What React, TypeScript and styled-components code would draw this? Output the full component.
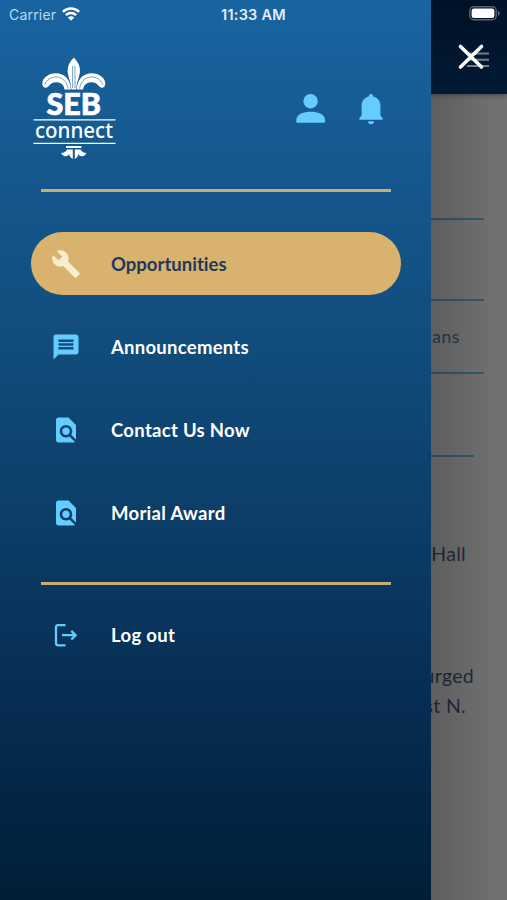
import React from "react";
import styled, { createGlobalStyle } from "styled-components";
import { MdBuild, MdFindInPage, MdMessage } from "react-icons/md";

const GlobalStyle = createGlobalStyle`
  * { box-sizing: border-box; }
  body { margin: 0; font-family: Lato, "Open Sans", sans-serif; }
`;

const Screen = styled.div`
  position: relative;
  width: 507px;
  height: 900px;
  overflow: hidden;
  background: #707070;
`;

const Page = styled.main`
  display: flex;
  flex-direction: column;
  height: 900px;
`;

const PageHeader = styled.header`
  display: flex;
  flex-direction: column;
  align-items: flex-end;
  flex: none;
  height: 94px;
  padding: 6px 7px 0 0;
  background: linear-gradient(#001027, #031a34);
  box-shadow: 0 1px 5px rgba(0, 0, 0, 0.4);
`;

const MenuGlyph = styled.svg`
  margin: 31px 11px 0 0;
`;

const PageRow = styled.div<{ $height: number; $inset?: number }>`
  flex: none;
  display: flex;
  align-items: center;
  justify-content: flex-end;
  height: ${(p) => p.$height}px;
  margin: 0 ${(p) => p.$inset ?? 23}px 0 40px;
  border-bottom: 2px solid #37586b;
`;

const RowText = styled.span`
  margin: 0 24px 0 0;
  font-size: 17.5px;
  letter-spacing: 0.6px;
  color: #263749;
`;

const Copy = styled.p<{ $top: number; $right: number }>`
  flex: none;
  margin: ${(p) => p.$top}px ${(p) => p.$right}px 0 40px;
  text-align: right;
  font-size: 19.5px;
  line-height: 30px;
  letter-spacing: 0.3px;
  color: #1f2b3d;
`;

const Shade = styled.div`
  position: absolute;
  inset: 94px 0 0 431px;
  background: linear-gradient(90deg, rgba(0, 0, 0, 0.16), rgba(0, 0, 0, 0) 85%);
`;

const CloseButton = styled.button`
  position: absolute;
  top: 43px;
  left: 457px;
  display: flex;
  padding: 0;
  border: 0;
  background: none;
`;

const Drawer = styled.aside`
  position: absolute;
  inset: 0 auto 0 0;
  display: flex;
  flex-direction: column;
  width: 431px;
  background: linear-gradient(#1965a1 0%, #165b94 13%, #124f80 34%, #0c3e68 57%, #062d52 78%, #001e37 100%);
`;

const StatusBar = styled.div`
  display: flex;
  flex: none;
  align-items: center;
  height: 28px;
  padding-left: 9px;
  font-family: Inter, Roboto, sans-serif;
  font-size: 14px;
  color: #e4eef8;
`;

const Carrier = styled.span`
  width: 53px;
  letter-spacing: 0.2px;
  color: #bcd8f0;
`;

const Clock = styled.span`
  margin-left: 141px;
  font-size: 14.5px;
  font-weight: 600;
  letter-spacing: 0.25px;
  white-space: nowrap;
`;

const Brand = styled.div`
  display: flex;
  flex: none;
  align-items: flex-start;
  height: 160.5px;
  padding: 28px 0 0 30px;
`;

const Profile = styled.svg`
  margin: 38px 0 0 176px;
`;

const Bell = styled.svg`
  margin: 38px 0 0 33px;
`;

const Rule = styled.hr`
  flex: none;
  width: 350px;
  height: 3px;
  margin: 0 0 0 41px;
  border: 0;
  background: #c4ae74;
`;

const Nav = styled.nav`
  display: flex;
  flex-direction: column;
  gap: 20px;
  padding: 40.5px 30px 37px 31px;
`;

const NavItem = styled.a<{ $active?: boolean }>`
  display: flex;
  align-items: center;
  height: 63.2px;
  padding-left: 19.5px;
  border-radius: 32px;
  color: ${(p) => (p.$active ? "#1d3a5f" : "#fff")};
  background: ${(p) => (p.$active ? "#d9b26d" : "transparent")};
  svg {
    flex: none;
    color: ${(p) => (p.$active ? "#f8edcf" : "#65ccff")};
  }
`;

const Label = styled.span<{ $spacing: number }>`
  margin-left: 30.5px;
  font-size: 18.5px;
  font-weight: 700;
  white-space: nowrap;
  letter-spacing: ${(p) => p.$spacing}px;
`;

const Footer = styled.div`
  padding: 19px 30px 0 31px;
`;

const WifiIcon = () => (
  <svg width="18" height="14" viewBox="0 0 18 14" fill="none" stroke="#fff" strokeWidth="2.4">
    <path d="M.9 4.8a11.6 11.6 0 0 1 16.2 0" />
    <path d="M3.9 8.1a7.4 7.4 0 0 1 10.2 0" />
    <path d="M9 13.8 5.9 10.6a4.4 4.4 0 0 1 6.2 0z" fill="#fff" stroke="none" />
  </svg>
);

const Battery = () => (
  <svg width="31" height="15" viewBox="0 0 31 15">
    <rect x=".75" y=".75" width="26.5" height="13" rx="4" fill="none" stroke="#596575" strokeWidth="1.4" />
    <rect x="2.6" y="2.5" width="22.8" height="9.5" rx="2.3" fill="#fff" />
    <path d="M29 5v4.5c2-.6 2-3.9 0-4.5z" fill="#687382" />
  </svg>
);

const Logo = () => (
  <svg width="90" height="106" viewBox="30 56 90 106" fill="#fff">
    <path d="M73.8 57.500c4.500 4.500 6.400 9 6.200 13.500-.3 6-3.200 10-3.700 18.500h-5c-.5-8.500-3.400-12.500-3.700-18.500-.2-4.500 1.700-9 6.200-13.500z" />
    <path id="petal" d="M70.800 89.500C70.500 79.500 64.500 73.300 56 73.300c-8 0-13.800 5-13.700 10.700.1 2 1.200 3.200 2.800 3.800 1.200 0 2.300-.5 3.200-1.300 2.200-3.200 5.200-4.700 8.700-4.300 4.500.5 7 3.300 7.500 7.300z" />
    <use href="#petal" transform="translate(147.600 0) scale(-1 1)" />
    <path d="M72.600 66v22M75 66v22M68 88.500c-1-7-5.500-11.300-11.800-11.500-5-.1-9.500 2.800-11.500 7.500M79.600 88.500c1-7 5.500-11.300 11.800-11.500 5-.1 9.500 2.800 11.500 7.500" fill="none" stroke="#1b609b" strokeWidth=".6" />
    <text x="46.500" y="115" fontFamily="Lato, sans-serif" fontSize="31" fontWeight="900" stroke="#fff" strokeWidth=".7" textLength="54.500" lengthAdjust="spacingAndGlyphs">SEB</text>
    <path d="M33.500 119.200h82v1.300h-82zM33.500 142.700h82v1.300h-82z" />
    <text x="35" y="138" fontFamily="Noto Sans, sans-serif" fontSize="22" fontWeight="500" textLength="78" lengthAdjust="spacingAndGlyphs">connect</text>
    <path d="M66 146h15.500v2H66z" />
    <path id="root-leaf" d="M67 149.500h5.800V159c-2.800-1.500-3.600-4-3.600-5-1 2-3 2.600-5 1.900-1.500-.5-2.300-1.800-3.200-2.900 3-.1 4.800-1.500 6-3.500z" />
    <use href="#root-leaf" transform="translate(147.600 0) scale(-1 1)" />
  </svg>
);

const LogoutIcon = () => (
  <svg width="30" height="30" viewBox="0 0 30 30" fill="none" stroke="currentColor" strokeWidth="2.300">
    <path d="M14.500 5.200H7.200q-2.200 0-2.200 2.200v15.700q0 2.200 2.200 2.200h7.300" />
    <path d="M11 15.200h13.200M20.300 10.900l4.300 4.300-4.300 4.300" />
  </svg>
);

const items = [
  { label: "Opportunities", Icon: MdBuild, active: true, spacing: 0.02 },
  { label: "Announcements", Icon: MdMessage, spacing: 0.26 },
  { label: "Contact Us Now", Icon: MdFindInPage, spacing: 0.3 },
  { label: "Morial Award", Icon: MdFindInPage, spacing: 0.3 },
];

export default function App() {
  return (
    <>
      <GlobalStyle />
      <Screen>
        <Page>
          <PageHeader>
            <Battery />
            <MenuGlyph width="22" height="16" viewBox="0 0 22 16" stroke="#757d88" strokeWidth="2">
              <path d="M0 1.500h22M0 7.700h22M0 13.900h22" />
            </MenuGlyph>
          </PageHeader>
          <PageRow $height={126} />
          <PageRow $height={81} />
          <PageRow $height={73}>
            <RowText>ans</RowText>
          </PageRow>
          <PageRow $height={83} $inset={33} />
          <Copy $top={82} $right={41}>Hall</Copy>
          <Copy $top={92} $right={33}>urged</Copy>
          <Copy $top={0} $right={41}>st N.</Copy>
        </Page>
        <Shade />
        <Drawer>
          <StatusBar>
            <Carrier>Carrier</Carrier>
            <WifiIcon />
            <Clock>11:33 AM</Clock>
          </StatusBar>
          <Brand>
            <Logo />
            <Profile width="30" height="30" viewBox="0 0 30 30" fill="#65ccff">
              <circle cx="14.600" cy="7.200" r="7.200" />
              <path d="M.3 26.200C.3 19.800 8 17.700 14.700 17.700S29.100 19.800 29.100 26.200v1.300q0 1.200-1.200 1.200H1.500q-1.200 0-1.200-1.200z" />
            </Profile>
            <Bell width="24" height="31" viewBox="0 0 24 31" fill="#65ccff">
              <path d="M12 0c1.300 0 2.200 1 2.200 2.300v.3c4.500 1 7.200 4.700 7.200 9.400v9.500l2.300 2.700v1.600H.3v-1.600l2.300-2.700V12c0-4.700 2.700-8.400 7.200-9.400v-.3C9.800 1 10.700 0 12 0zM9 27.200h6c0 1.900-1.300 3-3 3s-3-1.100-3-3z" />
            </Bell>
          </Brand>
          <Rule />
          <Nav>
            {items.map(({ label, Icon, active, spacing }) => (
              <NavItem key={label} $active={active}>
                <Icon size={30} />
                <Label $spacing={spacing}>{label}</Label>
              </NavItem>
            ))}
          </Nav>
          <Rule />
          <Footer>
            <NavItem>
              <LogoutIcon />
              <Label $spacing={0.35}>Log out</Label>
            </NavItem>
          </Footer>
        </Drawer>
        <CloseButton aria-label="Close menu">
          <svg width="28" height="28" viewBox="0 0 28 28" stroke="#fff" strokeWidth="3.600" strokeLinecap="round">
            <path d="M3.500 3.500l21 20.500M24.500 3.500l-21 20.500" />
          </svg>
        </CloseButton>
      </Screen>
    </>
  );
}
